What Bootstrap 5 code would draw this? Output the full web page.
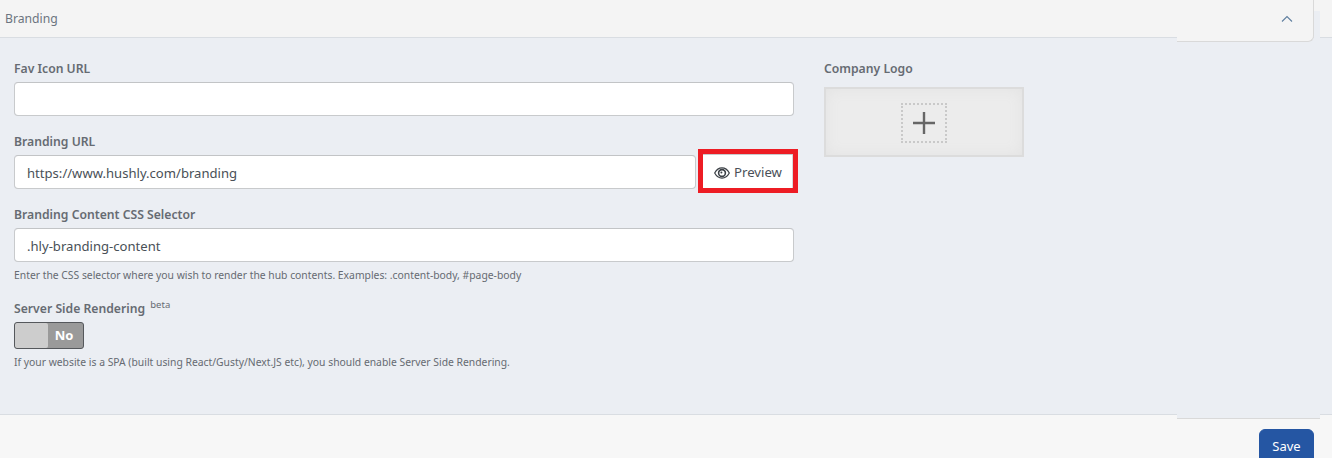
<!DOCTYPE html>
<html lang="en">
<head>
  <meta charset="UTF-8" />
  <meta name="viewport" content="width=device-width, initial-scale=1" />
  <title>Branding</title>
  <link href="https://cdn.jsdelivr.net/npm/bootstrap@5.3.0/dist/css/bootstrap.min.css" rel="stylesheet">
  <style>
    html, body {
      height: 458px;
      overflow: hidden;
    }
    body {
      background-color: #f7f7f7;
      font-family: "Noto Sans", "Open Sans", sans-serif;
      font-size: 13px;
      color: #5f6368;
    }
    .panel-head {
      height: 38px;
      padding: 1px 5px 0;
      background: #f4f4f4;
      border-bottom: 1px solid #d9dde2;
      color: #6c7480;
      font-size: 12.2px;
    }
    .head-tab {
      position: absolute;
      top: 0;
      left: 1177px;
      width: 137px;
      height: 42px;
      background: #f4f4f4;
      border-right: 1px solid #d9d9d9;
      border-bottom: 1px solid #d9d9d9;
      border-bottom-right-radius: 6px;
    }
    .head-strip {
      position: absolute;
      top: 11px;
      left: 1314px;
      width: 6px;
      height: 27px;
      background: #ebeef3;
    }
    .chevron-up {
      position: absolute;
      top: 15px;
      left: 1281px;
    }
    .panel-main {
      height: 377px;
      padding: 21px 14px 0;
      background: #ebeef3;
      border-bottom: 1px solid #d9dde2;
    }
    .main-left {
      width: 780px;
    }
    .main-right {
      width: 200px;
      margin-left: 30px;
    }
    .field-label {
      display: block;
      height: 20px;
      margin-bottom: 3px;
      line-height: 20px;
      font-size: 12.2px;
      font-weight: 600;
      color: #666b72;
    }
    .field-label sup {
      font-size: 9.5px;
      font-weight: 400;
      margin-left: 2px;
    }
    .field-box {
      height: 34px;
      padding: 1px 12px 0;
      border: 1px solid #c8cacc;
      border-top-color: #c2c4c6;
      border-radius: 4px;
      font-size: 13.1px;
      color: #495057;
    }
    .field-gap {
      margin-bottom: 16px;
    }
    .field-hint {
      margin-top: 5px;
      line-height: 16px;
      font-size: 10.35px;
      color: #666b72;
    }
    .preview-frame {
      width: 100px;
      height: 44px;
      margin: -6px -4px -4px 2px;
      padding-top: 3px;
      border: 5px solid #ed1c24;
      background: #fff;
      box-shadow: inset 0 1px 0 #c8cacc, inset -1px 0 0 #d8dadc;
      color: #4a5058;
      font-size: 13.2px;
    }
    .logo-box {
      height: 70px;
      margin-top: 8px;
      padding-top: 2px;
      border: 2px solid #dcdcdc;
      background: #ececec;
      box-shadow: inset 0 0 14px #e2e2e2;
    }
    .logo-dash {
      width: 46px;
      height: 40px;
      border: 2px dotted #c9c9c9;
    }
    .ssr-toggle {
      width: 70px;
      height: 27px;
      border: 1px solid #55585c;
      border-radius: 3px;
      background: #9a9a9a;
      overflow: hidden;
    }
    .ssr-knob {
      width: 33px;
      background: #cdcdcd;
      border-radius: 2px;
    }
    .ssr-text {
      padding-right: 3px;
      font-size: 13px;
      font-weight: 700;
      color: #fff;
    }
    .foot-tab {
      position: absolute;
      top: 414px;
      left: 1177px;
      width: 143px;
      height: 5px;
      background: #ebeef3;
      border-bottom: 1px solid #d9d9d9;
    }
    .save-btn {
      position: absolute;
      top: 429px;
      left: 1259px;
      width: 55px;
      height: 36px;
      padding: 0;
      background: #2556a3;
      border-color: #2556a3;
      font-size: 13px;
    }
  </style>
</head>
<body class="position-relative">

  <div class="panel-head d-flex align-items-center">Branding</div>
  <div class="head-tab"></div>
  <div class="head-strip"></div>
  <svg class="chevron-up" width="12" height="8" viewBox="0 0 12 8" fill="none" stroke="#5f7f9f" stroke-width="1.1">
    <path d="M1 6.5 6 1.5l5 5"/>
  </svg>

  <div class="panel-main d-flex">
    <div class="main-left">
      <div class="field-gap">
        <label class="field-label">Fav Icon URL</label>
        <input type="text" class="form-control field-box">
      </div>
      <div class="field-gap">
        <label class="field-label">Branding URL</label>
        <div class="d-flex">
          <input type="text" class="form-control field-box" value="https://www.hushly.com/branding">
          <div class="preview-frame flex-shrink-0 d-flex align-items-center justify-content-center gap-1">
            <svg width="16" height="12" viewBox="0 0 16 12" fill="none" stroke="#3a3f45" stroke-width="1.2">
              <path d="M.7 6C2.500 2.600 5 .9 8 .9s5.500 1.700 7.300 5.100C13.500 9.400 11 11.100 8 11.100S2.500 9.400.7 6Z"/>
              <circle cx="8" cy="6" r="3.4" stroke-width="1.6"/>
              <circle cx="7.4" cy="5.5" r="1" fill="#3a3f45" stroke="none"/>
            </svg>
            <span>Preview</span>
          </div>
        </div>
      </div>
      <div class="field-gap mb-0">
        <label class="field-label">Branding Content CSS Selector</label>
        <input type="text" class="form-control field-box" value=".hly-branding-content">
        <div class="field-hint">Enter the CSS selector where you wish to render the hub contents. Examples: .content-body, #page-body</div>
      </div>
      <div class="mt-3">
        <label class="field-label">Server Side Rendering <sup>beta</sup></label>
        <div class="ssr-toggle d-flex">
          <div class="ssr-knob"></div>
          <div class="ssr-text flex-grow-1 d-flex align-items-center justify-content-center">No</div>
        </div>
        <div class="field-hint">If your website is a SPA (built using React/Gusty/Next.JS etc), you should enable Server Side Rendering.</div>
      </div>
    </div>
    <div class="main-right">
      <label class="field-label">Company Logo</label>
      <div class="logo-box d-flex align-items-center justify-content-center">
        <div class="logo-dash d-flex align-items-center justify-content-center">
          <svg width="22" height="22" viewBox="0 0 22 22" stroke="#666" stroke-width="2.4">
            <path d="M0 11h22M11 0v22"/>
          </svg>
        </div>
      </div>
    </div>
  </div>

  <div class="foot-tab"></div>
  <button type="button" class="btn btn-primary save-btn">Save</button>

</body>
</html>
